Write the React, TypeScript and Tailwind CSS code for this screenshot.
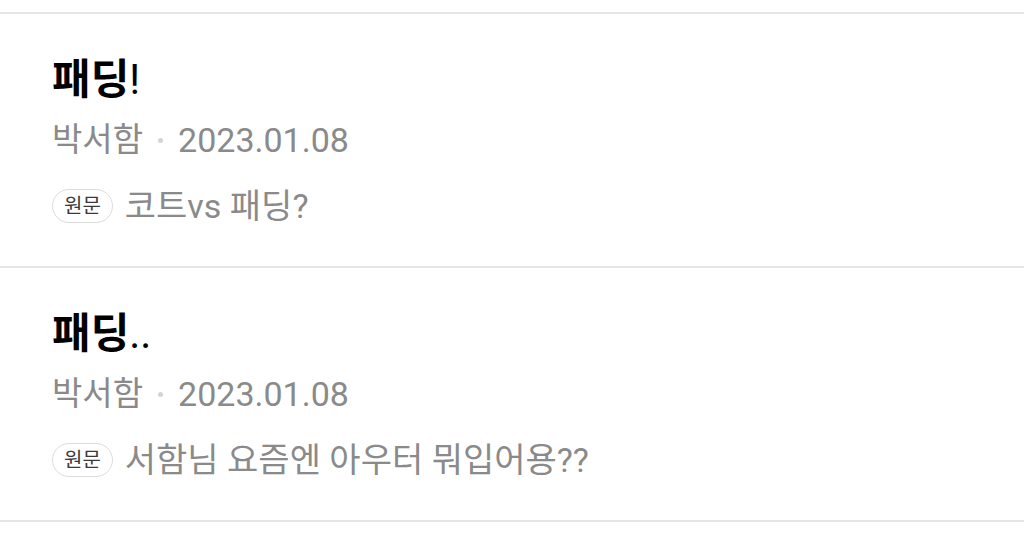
const posts = [
  { title: "패딩", mark: "!", author: "박서함", date: "2023.01.08", origin: "코트vs 패딩?" },
  { title: "패딩", mark: "..", author: "박서함", date: "2023.01.08", origin: "서함님 요즘엔 아우터 뭐입어용??" },
];

export default function App() {
  return (
    <div
      className="w-[1024px] h-[543px] bg-white overflow-hidden pt-[12px]"
      style={{ fontFamily: 'Roboto, "Noto Sans CJK KR", sans-serif' }}
    >
      <div className="border-t-2 border-[#e6e6e6]">
        {posts.map((p, i) => (
          <div key={i} className="h-[254px] border-b-2 border-[#e6e6e6] pl-[52px] pt-[40px]">
            <h2 className="text-[42px] leading-[52px] font-bold text-black">
              {p.title}
              <span className="font-normal">{p.mark}</span>
            </h2>
            <div className="mt-[12px] flex items-center text-[33px] leading-[44px] text-[#8a8a8a]">
              <span>{p.author}</span>
              <span className="mx-[15px] w-[5px] h-[5px] rounded-full bg-[#d4d4d4]" />
              <span className="text-[34px]">{p.date}</span>
            </div>
            <div className="mt-[24px] flex items-center h-[40px]">
              <span className="h-[34px] px-[11px] rounded-full border border-[#dcdcdc] text-[20px] leading-[32px] text-[#3a3a3a]">
                원문
              </span>
              <span className="ml-[12px] text-[34px] leading-[40px] text-[#8a8a8a]">{p.origin}</span>
            </div>
          </div>
        ))}
      </div>
    </div>
  );
}
